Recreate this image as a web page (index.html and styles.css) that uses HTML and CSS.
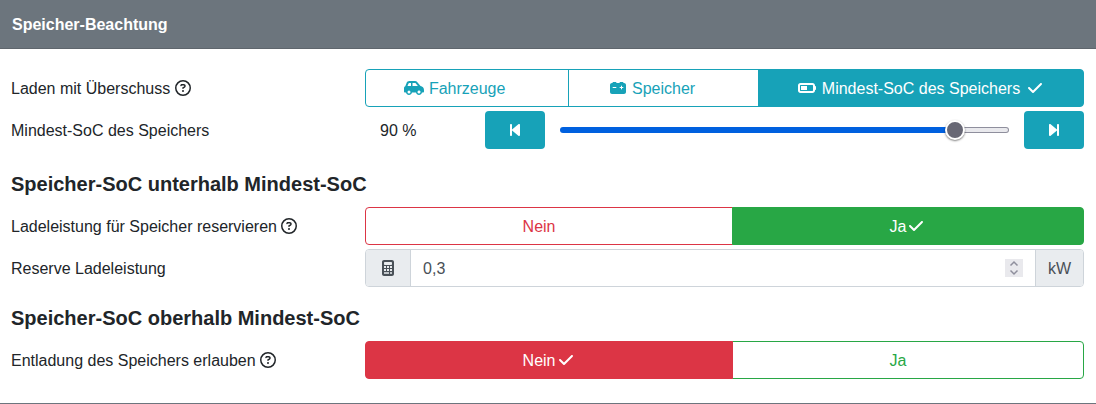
FILE: index.html
```
<!DOCTYPE html>
<html lang="de">
<head>
  <meta charset="UTF-8" />
  <meta name="viewport" content="width=device-width, initial-scale=1.0"/>
  <title>Speicher-Beachtung</title>
  <link rel="stylesheet" href="styles.css">
</head>
<body>
  <!-- Icons -->
  <svg class="sprite" aria-hidden="true">
    <symbol id="help" viewBox="0 0 512 512"><path d="M464 256A208 208 0 1 0 48 256a208 208 0 1 0 416 0zM0 256a256 256 0 1 1 512 0A256 256 0 1 1 0 256zm169.8-90.7c7.9-22.3 29.1-37.3 52.8-37.3h58.3c34.9 0 63.1 28.3 63.1 63.1c0 22.6-12.1 43.5-31.7 54.8L280 264.4c-.2 13-10.9 23.6-24 23.6c-13.3 0-24-10.7-24-24V250.5c0-8.6 4.6-16.5 12.1-20.8l44.3-25.4c4.7-2.7 7.6-7.7 7.6-13.1c0-8.4-6.8-15.1-15.1-15.1H222.6c-3.4 0-6.4 2.1-7.5 5.3l-.4 1.2c-4.4 12.5-18.2 19-30.6 14.6s-19-18.2-14.6-30.6l.4-1.2zM224 352a32 32 0 1 1 64 0 32 32 0 1 1 -64 0z"/></symbol>
    <symbol id="car" viewBox="0 0 640 512"><path d="M171.3 96H224v96H111.3l30.4-75.9C146.5 104 158.2 96 171.3 96zM272 192V96h81.2c9.7 0 18.9 4.4 25 12l67 84H272zm256.2 1L428.2 68c-18.2-22.8-45.8-36-75-36H171.3c-39.3 0-74.6 23.9-89.1 60.3L40.6 196.4C16.8 205.8 0 228.9 0 256V368c0 17.7 14.3 32 32 32H65.3c7.6 45.4 47.1 80 94.7 80s87.1-34.6 94.7-80H385.3c7.6 45.4 47.1 80 94.7 80s87.1-34.6 94.7-80H608c17.7 0 32-14.3 32-32V320c0-65.2-48.8-119-111.8-127zM434.7 368a48 48 0 1 1 90.5 32 48 48 0 1 1 -90.5-32zM160 336a48 48 0 1 1 0 96 48 48 0 1 1 0-96z"/></symbol>
    <symbol id="car-battery" viewBox="0 0 512 512"><path d="M80 96c0-17.7 14.3-32 32-32h64c17.7 0 32 14.3 32 32l96 0c0-17.7 14.3-32 32-32h64c17.7 0 32 14.3 32 32h16c35.3 0 64 28.7 64 64V384c0 35.3-28.7 64-64 64H64c-35.3 0-64-28.7-64-64V160c0-35.3 28.7-64 64-64l16 0zm304 96c0-8.8-7.2-16-16-16s-16 7.2-16 16v32H320c-8.8 0-16 7.2-16 16s7.2 16 16 16h32v32c0 8.8 7.2 16 16 16s16-7.2 16-16V256h32c8.8 0 16-7.2 16-16s-7.2-16-16-16H384V192zM80 240c0 8.8 7.2 16 16 16h96c8.8 0 16-7.2 16-16s-7.2-16-16-16H96c-8.8 0-16 7.2-16 16z"/></symbol>
    <symbol id="battery-half" viewBox="0 0 576 512"><path d="M464 160c8.8 0 16 7.2 16 16V336c0 8.8-7.2 16-16 16H80c-8.8 0-16-7.2-16-16V176c0-8.8 7.2-16 16-16H464zM80 96C35.8 96 0 131.8 0 176V336c0 44.2 35.8 80 80 80H464c44.2 0 80-35.8 80-80V320c17.7 0 32-14.3 32-32V224c0-17.7-14.3-32-32-32V176c0-44.2-35.8-80-80-80H80zm208 96H96V320H288V192z"/></symbol>
    <symbol id="check" viewBox="0 0 448 512"><path d="M438.6 105.4c12.5 12.5 12.5 32.8 0 45.3l-256 256c-12.5 12.5-32.8 12.5-45.3 0l-128-128c-12.5-12.5-12.5-32.8 0-45.3s32.8-12.5 45.3 0L160 338.7 393.4 105.4c12.5-12.5 32.8-12.5 45.3 0z"/></symbol>
    <symbol id="step-backward" viewBox="0 0 320 512"><path d="M267.5 440.6c9.5 7.9 22.8 9.7 34.1 4.4s18.4-16.6 18.4-29V96c0-12.4-7.2-23.7-18.4-29s-24.5-3.6-34.1 4.4l-192 160L64 241V96c0-17.7-14.3-32-32-32S0 78.3 0 96V416c0 17.7 14.3 32 32 32s32-14.3 32-32V271l11.5 9.6 192 160z"/></symbol>
    <symbol id="step-forward" viewBox="0 0 320 512"><path d="M52.5 440.6c-9.5 7.9-22.8 9.7-34.1 4.4S0 428.4 0 416V96C0 83.6 7.2 72.3 18.4 67s24.5-3.6 34.1 4.4l192 160L256 241V96c0-17.7 14.3-32 32-32s32 14.3 32 32V416c0 17.7-14.3 32-32 32s-32-14.3-32-32V271l-11.5 9.6-192 160z"/></symbol>
    <symbol id="calculator" viewBox="0 0 384 512"><path fill-rule="evenodd" d="M64 0C28.7 0 0 28.7 0 64V448c0 35.3 28.7 64 64 64H320c35.3 0 64-28.7 64-64V64c0-35.3-28.7-64-64-64H64zM96 64H288c17.7 0 32 14.3 32 32v32c0 17.7-14.3 32-32 32H96c-17.7 0-32-14.3-32-32V96c0-17.7 14.3-32 32-32zM64 192h64v64H64zM160 192h64v64h-64zM256 192h64v64h-64zM64 288h64v64H64zM160 288h64v64h-64zM256 288h64v64h-64zM64 392h160v48H64zM256 392h64v48h-64z"/></symbol>
    <symbol id="up" viewBox="0 0 10 9"><path d="M1.5 6.5L5 3l3.5 3.5" fill="none" stroke="currentColor" stroke-width="1.5"/></symbol>
    <symbol id="down" viewBox="0 0 10 9"><path d="M1.5 2.5L5 6l3.5-3.5" fill="none" stroke="currentColor" stroke-width="1.5"/></symbol>
  </svg>

  <form class="card">
    <div class="card-header">Speicher-Beachtung</div>
    <div class="card-body">

      <div class="form-row">
        <span class="form-label" id="modeLabel">Laden mit Überschuss <svg class="icon"><use href="#help"/></svg></span>
        <div class="btn-group" role="radiogroup" aria-labelledby="modeLabel">
          <input type="radio" name="mode" id="modeCar">
          <label class="btn btn-info" for="modeCar"><svg class="icon icon-fw"><use href="#car"/></svg> Fahrzeuge <svg class="icon icon-fw check"><use href="#check"/></svg></label>
          <input type="radio" name="mode" id="modeBat">
          <label class="btn btn-info" for="modeBat"><svg class="icon icon-fw"><use href="#car-battery"/></svg> Speicher <svg class="icon icon-fw check"><use href="#check"/></svg></label>
          <input type="radio" name="mode" id="modeSoc" checked>
          <label class="btn btn-info" for="modeSoc"><svg class="icon icon-fw"><use href="#battery-half"/></svg> Mindest-SoC des Speichers <svg class="icon icon-fw check"><use href="#check"/></svg></label>
        </div>
      </div>

      <div class="form-row range-row">
        <label class="form-label" for="minSoc">Mindest-SoC des Speichers</label>
        <div class="range-group">
          <output id="minSocValue" for="minSoc">90 %</output>
          <button type="button" class="btn-step" id="socDown" aria-label="Verringern"><svg class="icon icon-step"><use href="#step-backward"/></svg></button>
          <input type="range" id="minSoc" min="0" max="100" step="5" value="90" style="--fill: 90%">
          <button type="button" class="btn-step" id="socUp" aria-label="Erhöhen"><svg class="icon icon-step"><use href="#step-forward"/></svg></button>
        </div>
      </div>

      <h2>Speicher-SoC unterhalb Mindest-SoC</h2>

      <div class="form-row">
        <span class="form-label" id="reserveLabel">Ladeleistung für Speicher reservieren <svg class="icon"><use href="#help"/></svg></span>
        <div class="btn-group" role="radiogroup" aria-labelledby="reserveLabel">
          <input type="radio" name="reserve" id="reserveNo">
          <label class="btn btn-danger" for="reserveNo">Nein<svg class="icon icon-fw check"><use href="#check"/></svg></label>
          <input type="radio" name="reserve" id="reserveYes" checked>
          <label class="btn btn-success" for="reserveYes">Ja<svg class="icon icon-fw check"><use href="#check"/></svg></label>
        </div>
      </div>

      <div class="form-row">
        <label class="form-label" for="power">Reserve Ladeleistung</label>
        <div class="input-group">
          <span class="addon"><svg class="icon icon-fw"><use href="#calculator"/></svg></span>
          <div class="number">
            <input type="text" inputmode="decimal" id="power" value="0,3">
            <div class="spinner">
              <button type="button" id="powerUp" aria-label="Mehr"><svg><use href="#up"/></svg></button>
              <button type="button" id="powerDown" aria-label="Weniger"><svg><use href="#down"/></svg></button>
            </div>
          </div>
          <span class="addon">kW</span>
        </div>
      </div>

      <h2>Speicher-SoC oberhalb Mindest-SoC</h2>

      <div class="form-row">
        <span class="form-label" id="dischargeLabel">Entladung des Speichers erlauben <svg class="icon"><use href="#help"/></svg></span>
        <div class="btn-group" role="radiogroup" aria-labelledby="dischargeLabel">
          <input type="radio" name="discharge" id="dischargeNo" checked>
          <label class="btn btn-danger" for="dischargeNo">Nein<svg class="icon icon-fw check"><use href="#check"/></svg></label>
          <input type="radio" name="discharge" id="dischargeYes">
          <label class="btn btn-success" for="dischargeYes">Ja<svg class="icon icon-fw check"><use href="#check"/></svg></label>
        </div>
      </div>

    </div>
  </form>

  <script>
    // Mindest-SoC
    const minSoc = document.getElementById("minSoc");
    const minSocValue = document.getElementById("minSocValue");

    function showSoc() {
      minSocValue.textContent = minSoc.value + " %";
      minSoc.style.setProperty("--fill", minSoc.value + "%");
    }

    minSoc.addEventListener("input", showSoc);
    document.getElementById("socDown").addEventListener("click", () => {
      minSoc.stepDown();
      showSoc();
    });
    document.getElementById("socUp").addEventListener("click", () => {
      minSoc.stepUp();
      showSoc();
    });

    // Reserve Ladeleistung in 0,1 kW Schritten
    const power = document.getElementById("power");

    function changePower(step) {
      const value = parseFloat(power.value.replace(",", ".")) || 0;
      power.value = Math.max(0, value + step).toFixed(1).replace(".", ",");
    }

    document.getElementById("powerUp").addEventListener("click", () => changePower(0.1));
    document.getElementById("powerDown").addEventListener("click", () => changePower(-0.1));
  </script>
</body>
</html>
```
FILE: styles.css
```
* {
  box-sizing: border-box;
}

body {
  margin: 0;
  background: #fff;
  color: #212529;
  font-family: Arial, "Liberation Sans", sans-serif;
  font-size: 16px;
  line-height: 24px;
}

button, input {
  font: inherit;
  color: inherit;
  margin: 0;
}

.sprite {
  display: none;
}

.icon {
  width: 16px;
  height: 16px;
  fill: currentColor;
  vertical-align: -2px;
}

.icon-fw {
  width: 20px;
}

.icon-step {
  width: 10px;
}

.card {
  border-bottom: 1px solid #6c757d;
}

.card-header {
  padding: 13px 12px 11px;
  background: #6c757d;
  border-bottom: 1px solid #5f666d;
  color: #fff;
  font-weight: bold;
}

.card-body {
  padding: 20px 12px 20px 11px;
}

h2 {
  margin: 19px 0 11px;
  font-size: 20px;
  line-height: 24px;
}

.form-row {
  display: grid;
  grid-template-columns: 33% 67%;
  align-items: center;
  margin-bottom: 4px;
}

.range-row {
  padding-bottom: 4px;
}

.form-label {
  padding-top: 2px;
}

/* Auswahl-Buttons */
.btn-group {
  position: relative;
  display: flex;
}

.btn-group input {
  position: absolute;
  opacity: 0;
  pointer-events: none;
}

.btn {
  flex: 1 1 auto;
  padding: 7px 12px 5px;
  border: 1px solid currentColor;
  text-align: center;
  cursor: pointer;
}

.btn:first-of-type {
  border-radius: 4px 0 0 4px;
}

.btn:last-of-type {
  border-radius: 0 4px 4px 0;
}

.btn:not(:first-of-type) {
  margin-left: -1px;
}

.btn-info {
  color: #17a2b8;
}

.btn-danger {
  color: #dc3545;
}

.btn-success {
  color: #28a745;
}

.check {
  visibility: hidden;
}

input:checked + .btn {
  z-index: 1;
  color: #fff;
}

input:checked + .btn .check {
  visibility: visible;
}

input:checked + .btn-info {
  background: #17a2b8;
  border-color: #17a2b8;
}

input:checked + .btn-danger {
  background: #dc3545;
  border-color: #dc3545;
}

input:checked + .btn-success {
  background: #28a745;
  border-color: #28a745;
}

input:focus-visible + .btn {
  box-shadow: 0 0 0 3px rgba(0, 123, 255, 0.5);
}

/* Schieberegler */
.range-group {
  display: flex;
  align-items: center;
  gap: 15px;
}

output {
  flex: 0 0 105px;
  padding: 2px 0 0 15px;
}

.btn-step {
  flex: 0 0 60px;
  height: 38px;
  padding: 8px 12px 6px;
  border: none;
  border-radius: 4px;
  background: #17a2b8;
  color: #fff;
  cursor: pointer;
}

input[type="range"] {
  -webkit-appearance: none;
  appearance: none;
  flex: 1;
  min-width: 0;
  height: 20px;
  background: none;
}

input[type="range"]::-webkit-slider-runnable-track {
  height: 6px;
  border: 1px solid transparent;
  border-radius: 3px;
  background:
    linear-gradient(#0060df, #0060df) 0 0 / var(--fill) 100% no-repeat border-box,
    linear-gradient(#e9e9ed, #e9e9ed) padding-box,
    #8f8f9d border-box;
}

input[type="range"]::-webkit-slider-thumb {
  -webkit-appearance: none;
  width: 20px;
  height: 20px;
  margin-top: -8px;
  border: 2px solid #fff;
  border-radius: 50%;
  background: #676774;
  box-shadow: 0 1px 2px rgba(0, 0, 0, 0.5);
}

/* Eingabefeld */
.input-group {
  display: flex;
  height: 38px;
  border: 1px solid #ced4da;
  border-radius: 4px;
  overflow: hidden;
  color: #495057;
}

.addon {
  padding: 7px 12px 5px;
  background: #e9ecef;
}

.number {
  flex: 1;
  display: flex;
  align-items: center;
  padding: 0 12px;
  border: 1px solid #ced4da;
  border-width: 0 1px;
}

.number input {
  flex: 1;
  min-width: 0;
  padding: 2px 0 0;
  border: none;
  outline: none;
  background: none;
}

.spinner {
  display: flex;
  flex-direction: column;
  width: 18px;
  background: #e9e9ed;
  color: #8f8f9d;
}

.spinner button {
  display: flex;
  justify-content: center;
  height: 9px;
  padding: 0;
  border: none;
  background: none;
}

.spinner svg {
  width: 10px;
  height: 9px;
}
```
